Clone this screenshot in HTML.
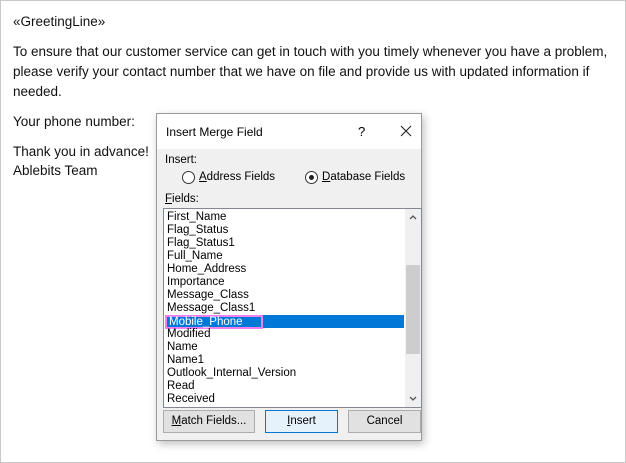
<!DOCTYPE html>
<html><head><style>
*{margin:0;padding:0;box-sizing:border-box}
body{width:626px;height:463px;background:#fff;position:relative;overflow:hidden;font-family:"Liberation Sans",sans-serif}
.frame{position:absolute;left:0;top:0;width:626px;height:463px;border:1px solid #c8c8c8}
.t{position:absolute;left:13px;font-size:13.5px;color:#111;white-space:nowrap;line-height:20px}
.dlg{position:absolute;left:156px;top:113px;width:266px;height:328px;background:#f0f0f0;border:1px solid #9a9a9a;box-shadow:2px 3px 8px rgba(0,0,0,.25);font-size:11.5px;color:#000}
.title{position:absolute;left:0;top:0;width:264px;height:35px;background:#fff}
.a{position:absolute;white-space:nowrap}
.radio{position:absolute;width:13px;height:13px;border:1px solid #333;border-radius:50%;background:#fff}
.list{position:absolute;left:6px;top:94px;width:259px;height:200px;background:#fff;border:1px solid #828790}
.row{position:absolute;left:3px;height:13px;line-height:13px;white-space:nowrap}
.sb{position:absolute;right:0;top:0;width:16px;height:198px;background:#f0f0f0}
.btn{position:absolute;top:296px;height:23px;border:1px solid #adadad;background:#e1e1e1;text-align:center;line-height:21px}
</style></head><body>
<div class="frame"></div>
<div class="t" style="top:12px">«GreetingLine»</div>
<div class="t" style="top:42px">To ensure that our customer service can get in touch with you timely whenever you have a problem,</div>
<div class="t" style="top:62px">please verify your contact number that we have on file and provide us with updated information if</div>
<div class="t" style="top:82px">needed.</div>
<div class="t" style="top:112px">Your phone number:</div>
<div class="t" style="top:142px">Thank you in advance!</div>
<div class="t" style="top:161px">Ablebits Team</div>
<div class="dlg">
<div class="title"></div>
<div class="a" style="left:9px;top:11px;font-size:12px">Insert Merge Field</div>
<div class="a" style="left:201px;top:10px;font-size:13px">?</div>
<svg class="a" style="left:243px;top:11px" width="12" height="12" viewBox="0 0 12 12"><path d="M1 1L11 11M11 1L1 11" stroke="#222" stroke-width="1.1"/></svg>
<div class="a" style="left:8px;top:40px">Insert:</div>
<div class="radio" style="left:25px;top:57px"></div>
<div class="a" style="left:42px;top:57px"><u>A</u>ddress Fields</div>
<div class="radio" style="left:148px;top:57px"><div style="position:absolute;left:3px;top:3px;width:5px;height:5px;border-radius:50%;background:#222"></div></div>
<div class="a" style="left:165px;top:57px"><u>D</u>atabase Fields</div>
<div class="a" style="left:8px;top:79px"><u>F</u>ields:</div>
<div class="list">
<div class="row" style="top:2px">First_Name</div>
<div class="row" style="top:15px">Flag_Status</div>
<div class="row" style="top:28px">Flag_Status1</div>
<div class="row" style="top:41px">Full_Name</div>
<div class="row" style="top:54px">Home_Address</div>
<div class="row" style="top:67px">Importance</div>
<div class="row" style="top:80px">Message_Class</div>
<div class="row" style="top:93px">Message_Class1</div>
<div style="position:absolute;left:1px;top:106px;width:239px;height:13px;background:#0078d7"></div>
<div class="row" style="top:106px;left:1px;color:#fff;border:2px solid #f07ff0;height:14px;line-height:10px;padding:0 2px;width:98px">Mobile_Phone</div>
<div class="row" style="top:119px">Modified</div>
<div class="row" style="top:132px">Name</div>
<div class="row" style="top:145px">Name1</div>
<div class="row" style="top:158px">Outlook_Internal_Version</div>
<div class="row" style="top:171px">Read</div>
<div class="row" style="top:184px">Received</div>
<div class="sb"><div style="position:absolute;left:1px;top:56px;width:14px;height:89px;background:#cdcdcd"></div>
<svg class="a" style="left:4px;top:5px" width="8" height="6" viewBox="0 0 8 6"><path d="M1 5L4 2L7 5" stroke="#555" stroke-width="1.3" fill="none"/></svg>
<svg class="a" style="left:4px;top:187px" width="8" height="6" viewBox="0 0 8 6"><path d="M1 1L4 4L7 1" stroke="#555" stroke-width="1.3" fill="none"/></svg></div>
</div>
<div class="btn" style="left:6px;width:92px"><u>M</u>atch Fields...</div>
<div class="btn" style="left:108px;width:73px;border-color:#0078d7;background:#e5f1fb"><u>I</u>nsert</div>
<div class="btn" style="left:191px;width:73px">Cancel</div>
</div>
</body></html>
